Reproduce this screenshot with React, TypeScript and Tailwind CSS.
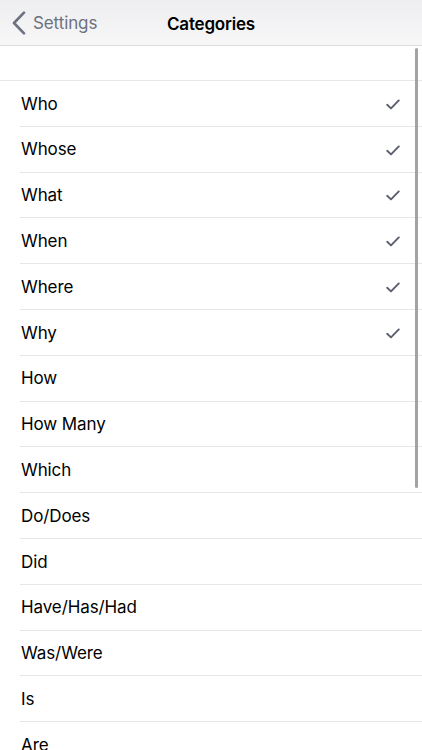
const categories = [
  { name: "Who", checked: true },
  { name: "Whose", checked: true },
  { name: "What", checked: true },
  { name: "When", checked: true },
  { name: "Where", checked: true },
  { name: "Why", checked: true },
  { name: "How", checked: false },
  { name: "How Many", checked: false },
  { name: "Which", checked: false },
  { name: "Do/Does", checked: false },
  { name: "Did", checked: false },
  { name: "Have/Has/Had", checked: false },
  { name: "Was/Were", checked: false },
  { name: "Is", checked: false },
  { name: "Are", checked: false },
]

function Check() {
  return (
    <svg width="14" height="11" viewBox="0 0 14 11" fill="none" className="shrink-0">
      <path d="M1.2 5.8 L5 9.4 L12.8 1.4" stroke="#5a5f6b" strokeWidth="1.9" strokeLinecap="round" strokeLinejoin="round" />
    </svg>
  )
}

function BackChevron() {
  return (
    <svg width="14" height="24" viewBox="0 0 14 24" fill="none" className="shrink-0">
      <path d="M12 1.6 L2 12 L12 22.4" stroke="#6c7180" strokeWidth="2.6" strokeLinecap="round" strokeLinejoin="round" />
    </svg>
  )
}

export default function App() {
  return (
    <div
      className="relative w-[422px] h-[750px] overflow-hidden bg-white"
      style={{ fontFamily: '"Inter", "Liberation Sans", sans-serif' }}
    >
      <header className="h-[46px] flex items-center relative border-b border-[#dcdcdf] bg-gradient-to-b from-[#eeeef0] to-[#f7f7f8]">
        <div className="flex items-center pl-[12px] pt-[1px] text-[#6c7180]">
          <BackChevron />
          <span className="text-[17px] ml-[7px] mt-[2px] tracking-[-0.1px]">Settings</span>
        </div>
        <h1 className="absolute left-0 right-0 top-[12px] text-center text-[17px] font-semibold text-black tracking-[-0.2px] pointer-events-none">
          Categories
        </h1>
      </header>

      <div className="h-[35px] border-b border-[#e6e6e8]" />

      <ul className="pl-[20px]">
        {categories.map((c) => (
          <li key={c.name} className="h-[45.8px] flex items-center border-b border-[#e6e6e8] pr-[22px] pt-[2px]">
            <span className="flex-1 pl-[1px] text-[17px] text-black tracking-[-0.1px]">{c.name}</span>
            {c.checked && <Check />}
          </li>
        ))}
      </ul>

      <div className="absolute left-[415px] top-[48px] w-[3px] h-[440px] rounded-full bg-[#a3a3a6]" />
    </div>
  )
}
